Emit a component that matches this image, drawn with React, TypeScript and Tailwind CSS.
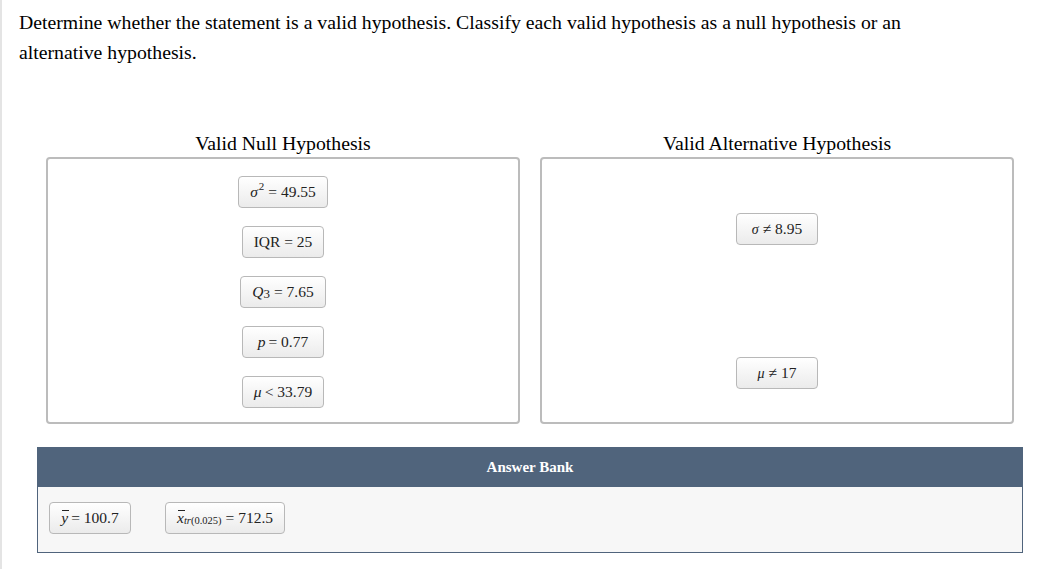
import React from "react";

const Chip = ({ children, wide }: { children: React.ReactNode; wide?: boolean }) => (
  <div
    className={`flex h-[32px] items-center justify-center rounded-[4px] border border-[#b8b8b8] bg-gradient-to-b from-white to-[#ebebeb] px-[11px] text-[15.5px] text-[#222] ${
      wide ? "" : "min-w-[82px]"
    }`}
  >
    {children}
  </div>
);

// variable with a bar drawn over it (y-bar, x-bar)
const Bar = ({ v }: { v: string }) => (
  <span className="relative inline-block">
    <span className="absolute left-[1px] right-[-1px] top-[4px] h-px bg-[#222]" />
    <i>{v}</i>
  </span>
);

const App = () => {
  return (
    <div
      className="min-h-[569px] border-l-2 border-[#e4e4e4] bg-white text-black"
      style={{ fontFamily: '"Liberation Serif", "Times New Roman", serif' }}
    >
      {/* Question */}
      <p className="max-w-[940px] pl-[17px] pt-[7px] text-[19.75px] leading-[30px]">
        Determine whether the statement is a valid hypothesis. Classify each valid hypothesis as a null hypothesis or an
        alternative hypothesis.
      </p>

      <div className="ml-[35px] mt-[65px] w-[986px]">
        {/* Drop zones */}
        <div className="flex gap-[20px] px-[9px]">
          <div className="flex flex-1 flex-col">
            <h3 className="mb-[2px] text-center text-[19.75px] leading-[23px]">Valid Null Hypothesis</h3>
            <div className="flex h-[267px] flex-col items-center gap-[18px] rounded-[4px] border-2 border-[#bcbcbc] pt-[17px]">
              <Chip>
                <i>σ</i>
                <sup className="-top-[6px] ml-[1px] text-[11px]">2</sup>
                <span className="ml-[4px]">= 49.55</span>
              </Chip>
              <Chip>IQR = 25</Chip>
              <Chip>
                <i>Q</i>
                <span className="relative top-[2px] text-[13px]">3</span>
                <span className="ml-[4px]">= 7.65</span>
              </Chip>
              <Chip>
                <i>p</i>
                <span className="ml-[3px]">= 0.77</span>
              </Chip>
              <Chip>
                <i>μ</i>
                <span className="ml-[3px]">&lt; 33.79</span>
              </Chip>
            </div>
          </div>
          <div className="flex flex-1 flex-col">
            <h3 className="mb-[2px] text-center text-[19.75px] leading-[23px]">Valid Alternative Hypothesis</h3>
            <div className="flex h-[267px] flex-col items-center gap-[112px] rounded-[4px] border-2 border-[#bcbcbc] pt-[54px]">
              <Chip>
                <i className="text-[14px]">σ</i>
                <span className="ml-[4px]">≠ 8.95</span>
              </Chip>
              <Chip>
                <i className="text-[14px]">μ</i>
                <span className="ml-[4px]">≠ 17</span>
              </Chip>
            </div>
          </div>
        </div>

        {/* Answer bank */}
        <div className="mt-[23px]">
          <div className="flex h-[40px] items-center justify-center bg-[#50647c] text-[15px] font-bold text-white">
            Answer Bank
          </div>
          <div className="flex h-[66px] items-start gap-[34px] border border-t-0 border-[#50647c] bg-[#f7f7f7] px-[11px] pt-[15px]">
            <Chip>
              <Bar v="y" />
              <span className="ml-[3px]">= 100.7</span>
            </Chip>
            <Chip wide>
              <Bar v="x" />
              <span className="relative top-[3px] text-[10.5px]">
                <i>tr</i>(0.025)
              </span>
              <span className="ml-[4px]">= 712.5</span>
            </Chip>
          </div>
        </div>
      </div>
    </div>
  );
};

export default App;
